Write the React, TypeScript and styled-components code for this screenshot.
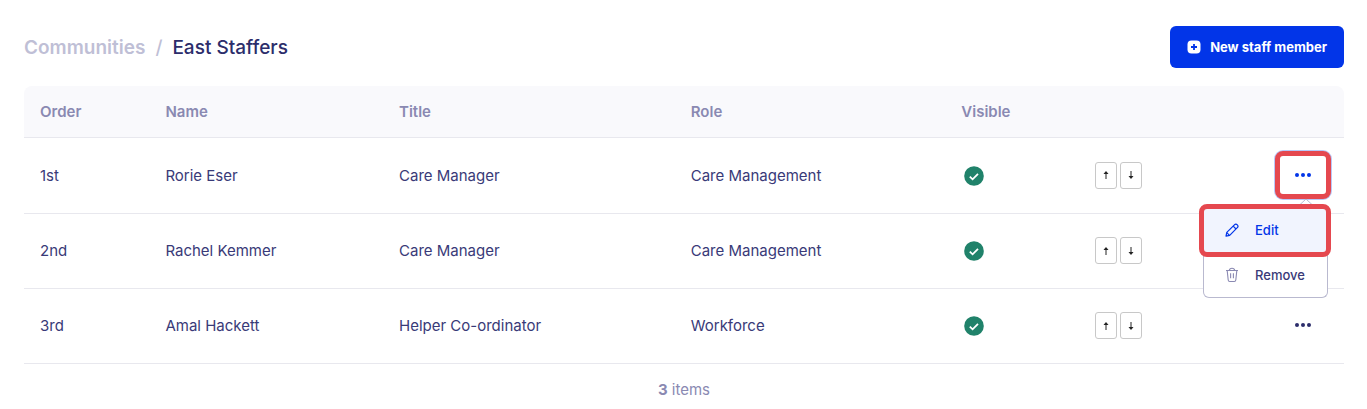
import React from "react";
import styled, { createGlobalStyle } from "styled-components";

const GlobalStyle = createGlobalStyle`
  *, *::before, *::after { box-sizing: border-box; }
  body {
    margin: 0;
    background: #fff;
    color: #393a78;
    font-family: Inter, "Liberation Sans", sans-serif;
    font-size: 15px;
    line-height: 20px;
  }
  button { font-family: inherit; cursor: pointer; }
`;

const Page = styled.main`
  padding: 26px 23px 8px 24px;
`;

const Header = styled.header`
  display: flex;
  align-items: center;
  justify-content: space-between;
  margin-bottom: 18px;
`;

const Breadcrumb = styled.nav`
  display: flex;
  gap: 10px;
  padding-top: 2px;
  font-size: 19px;
  line-height: 24px;
  font-weight: 500;
  color: #bfbfd6;
`;

const CrumbLink = styled.a`
  color: inherit;
  text-decoration: none;
  font-weight: 600;
`;

const Current = styled.span`
  color: #2c2d6b;
`;

const PrimaryButton = styled.button`
  display: flex;
  align-items: center;
  gap: 9px;
  height: 42px;
  padding: 0 17px;
  border: 0;
  border-radius: 6px;
  background: #0235e8;
  color: #fff;
  font-size: 13px;
  font-weight: 700;
`;

const Table = styled.table`
  width: 100%;
  table-layout: fixed;
  border-collapse: separate;
  border-spacing: 0;
`;

const Col = styled.col<{ $share?: string }>`
  width: ${(p) => p.$share ?? "auto"};
`;

const HeadCell = styled.th`
  height: 52px;
  padding: 0 16px;
  text-align: left;
  font-weight: 600;
  color: #8a89b2;
  background: #f9f9fc;
  border-bottom: 1px solid #e8e8ee;
  &:first-child { border-top-left-radius: 8px; }
  &:last-child { border-top-right-radius: 8px; }
`;

const Cell = styled.td`
  height: 75px;
  padding: 0 16px;
  border-bottom: 1px solid #e8e8ee;
  tr:first-child > & { height: 76px; }
`;

const Check = styled.svg`
  display: block;
  margin-left: 3px;
`;

const OrderButtons = styled.div`
  display: flex;
  gap: 3px;
  padding-bottom: 1px;
`;

const OrderButton = styled.button`
  display: flex;
  align-items: center;
  justify-content: center;
  width: 22px;
  height: 27px;
  padding: 0;
  border: 1px solid #c8c8c8;
  border-radius: 3px;
  background: #fff;
  color: #222;
`;

const ActionCell = styled(Cell)`
  padding: 0;
`;

const Actions = styled.div`
  position: relative;
  display: flex;
  justify-content: flex-end;
  padding: 0 13px 2px 0;
`;

const highlight = "#e5484f";

const MoreButton = styled.button<{ $open: boolean }>`
  display: flex;
  align-items: center;
  justify-content: center;
  width: 56px;
  height: 48px;
  padding: 0;
  border: 5px solid ${(p) => (p.$open ? highlight : "transparent")};
  border-radius: 8px;
  background: #fff;
  box-shadow: ${(p) => (p.$open ? "0 0 0 1px #b9c8f8" : "none")};
  color: ${(p) => (p.$open ? "#0235e8" : "#2c2d6b")};
`;

const Menu = styled.div`
  position: absolute;
  z-index: 1;
  top: 53px;
  right: 13px;
  width: 132px;
`;

const Caret = styled.svg`
  position: absolute;
  top: -6px;
  right: 17px;
`;

const MenuItem = styled.button<{ $active?: boolean }>`
  display: flex;
  align-items: center;
  gap: 16px;
  font-size: 13px;
  font-weight: 500;
  text-align: left;
  ${(p) =>
    p.$active
      ? `
    position: relative;
    width: 100%;
    height: 53px;
    padding: 0 0 0 21px;
    border: 5px solid ${highlight};
    border-radius: 8px;
    background: #f1f4fe;
    color: #0235e8;
  `
      : `
    width: 125px;
    height: 45px;
    margin: -4px 3px 0 4px;
    padding: 0 0 0 21px;
    border: 1px solid #b9b9cf;
    border-top: 0;
    border-radius: 0 0 6px 6px;
    background: #fff;
    color: #393a78;
  `}
`;

const Footer = styled.p`
  margin: 16px 0 0;
  text-align: center;
  color: #8a89b2;
`;

const PlusIcon = () => (
  <svg width="14" height="14" viewBox="0 0 14 14" aria-hidden="true">
    <rect x="0.5" y="0.5" width="13" height="13" rx="4" fill="#fff" />
    <path d="M7 4v6M4 7h6" stroke="#0235e8" strokeWidth="1.8" />
  </svg>
);

const CheckIcon = () => (
  <Check width="20" height="20" viewBox="0 0 20 20" role="img" aria-label="Visible">
    <circle cx="10" cy="10" r="9.8" fill="#20826a" />
    <path d="M5.8 10.6l2.8 2.7 5.4-5.5" fill="none" stroke="#fff" strokeWidth="1.8" />
  </Check>
);

const ArrowIcon = ({ down = false }: { down?: boolean }) => (
  <svg width="8" height="10" viewBox="0 0 8 10" aria-hidden="true">
    {down ? (
      <>
        <path d="M4 1v6" stroke="currentColor" />
        <path d="M1.5 6h5L4 9z" fill="currentColor" />
      </>
    ) : (
      <>
        <path d="M4 9V3" stroke="currentColor" />
        <path d="M1.5 4h5L4 1z" fill="currentColor" />
      </>
    )}
  </svg>
);

const DotsIcon = () => (
  <svg width="16" height="4" viewBox="0 0 16 4" fill="currentColor" aria-hidden="true">
    <circle cx="2" cy="2" r="2" />
    <circle cx="8" cy="2" r="2" />
    <circle cx="14" cy="2" r="2" />
  </svg>
);

const PencilIcon = () => (
  <svg width="14" height="14" viewBox="0 0 14 14" fill="none" stroke="#0235e8" strokeWidth="1.2" strokeLinejoin="round" aria-hidden="true">
    <path d="M1 13.2l.8-3.8L9.4 1.8a2 2 0 0 1 2.9 2.9L4.7 12.3z" />
    <path d="M8.2 3.2l2.8 2.8" />
    <path d="M1.8 9.6l2.7 2.7" />
  </svg>
);

const TrashIcon = () => (
  <svg width="14" height="16" viewBox="0 0 14 16" fill="none" stroke="#8a89b2" strokeWidth="1.1" strokeLinejoin="round" aria-hidden="true">
    <path d="M1 3.5h12M4.3 3.3C4.6 .5 9.4 .5 9.7 3.3M2.2 3.7l1 9.3c.1 1 .6 1.5 1.5 1.5h4.6c.9 0 1.4-.5 1.5-1.5l1-9.3" />
    <path d="M5.6 6.3v5M8.4 6.3v5" />
  </svg>
);

const staff = [
  { order: "1st", name: "Rorie Eser", title: "Care Manager", role: "Care Management" },
  { order: "2nd", name: "Rachel Kemmer", title: "Care Manager", role: "Care Management" },
  { order: "3rd", name: "Amal Hackett", title: "Helper Co-ordinator", role: "Workforce" },
];

const ActionMenu = () => (
  <Menu role="menu">
    <Caret width="16" height="8" viewBox="0 0 16 8" aria-hidden="true">
      <path d="M1 7.5L8 1l7 6.5" fill="#fff" stroke="#b9b9cf" />
    </Caret>
    <MenuItem role="menuitem" type="button" $active>
      <PencilIcon />
      Edit
    </MenuItem>
    <MenuItem role="menuitem" type="button">
      <TrashIcon />
      Remove
    </MenuItem>
  </Menu>
);

export default function App() {
  const openRow = 0;
  return (
    <>
      <GlobalStyle />
      <Page>
        <Header>
          <Breadcrumb aria-label="Breadcrumb">
            <CrumbLink href="#communities">Communities</CrumbLink>
            <span>/</span>
            <Current aria-current="page">East Staffers</Current>
          </Breadcrumb>
          <PrimaryButton type="button">
            <PlusIcon />
            New staff member
          </PrimaryButton>
        </Header>
        <Table>
          <colgroup>
            <Col $share="9.5%" />
            <Col $share="17.7%" />
            <Col $share="22.1%" />
            <Col $share="20.5%" />
            <Col $share="10.1%" />
            <Col $share="10%" />
            <Col />
          </colgroup>
          <thead>
            <tr>
              <HeadCell scope="col">Order</HeadCell>
              <HeadCell scope="col">Name</HeadCell>
              <HeadCell scope="col">Title</HeadCell>
              <HeadCell scope="col">Role</HeadCell>
              <HeadCell scope="col">Visible</HeadCell>
              <HeadCell aria-label="Reorder" />
              <HeadCell aria-label="Actions" />
            </tr>
          </thead>
          <tbody>
            {staff.map((s, i) => (
              <tr key={s.order}>
                <Cell>{s.order}</Cell>
                <Cell>{s.name}</Cell>
                <Cell>{s.title}</Cell>
                <Cell>{s.role}</Cell>
                <Cell><CheckIcon /></Cell>
                <Cell>
                  <OrderButtons>
                    <OrderButton type="button" aria-label={`Move ${s.name} up`}><ArrowIcon /></OrderButton>
                    <OrderButton type="button" aria-label={`Move ${s.name} down`}><ArrowIcon down /></OrderButton>
                  </OrderButtons>
                </Cell>
                <ActionCell>
                  <Actions>
                    <MoreButton type="button" $open={i === openRow} aria-label={`Actions for ${s.name}`} aria-expanded={i === openRow}>
                      <DotsIcon />
                    </MoreButton>
                    {i === openRow && <ActionMenu />}
                  </Actions>
                </ActionCell>
              </tr>
            ))}
          </tbody>
        </Table>
        <Footer><strong>3</strong> items</Footer>
      </Page>
    </>
  );
}
